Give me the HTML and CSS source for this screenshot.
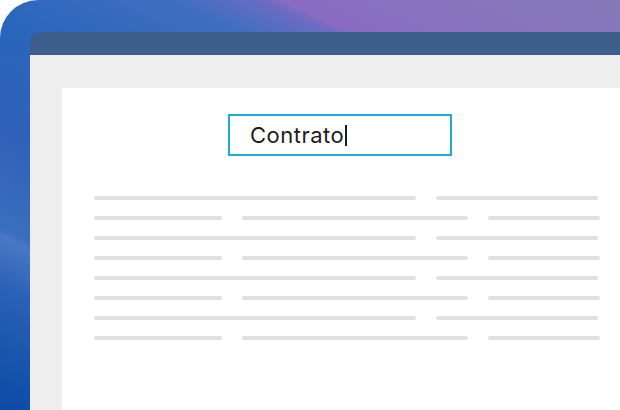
FILE: index.html
```html
<!DOCTYPE html>
<html lang="pt">
<head>
<meta charset="utf-8">
<title>Contrato</title>
<link rel="stylesheet" href="styles.css">
</head>
<body>
<div class="frame">
  <div class="window">
    <div class="titlebar"></div>
    <div class="content">
      <div class="page">
        <div class="search"><span class="query">Contrato</span><span class="caret"></span></div>
        <div class="lines">
          <div class="row"><span class="bar w322"></span><span class="bar w162"></span></div>
          <div class="row"><span class="bar w128"></span><span class="bar w226"></span><span class="bar w112"></span></div>
          <div class="row"><span class="bar w322"></span><span class="bar w162"></span></div>
          <div class="row"><span class="bar w128"></span><span class="bar w226"></span><span class="bar w112"></span></div>
          <div class="row"><span class="bar w322"></span><span class="bar w162"></span></div>
          <div class="row"><span class="bar w128"></span><span class="bar w226"></span><span class="bar w112"></span></div>
          <div class="row"><span class="bar w322"></span><span class="bar w162"></span></div>
          <div class="row"><span class="bar w128"></span><span class="bar w226"></span><span class="bar w112"></span></div>
        </div>
      </div>
    </div>
  </div>
</div>
</body>
</html>
```
FILE: styles.css
```css
html, body {
  margin: 0;
  padding: 0;
  background: #ffffff;
  width: 620px;
  height: 410px;
  overflow: hidden;
}

.frame {
  width: 620px;
  height: 410px;
  box-sizing: border-box;
  padding: 32px 0 0 30px;
  border-top-left-radius: 38px;
  overflow: hidden;
  background:
    linear-gradient(205deg, #857bb9 0%, #8a6cc2 22.5%, #6a6cc2 24%, #3f6ec0 30%, #2a66bc 44%, #2f62b8 60%, #3a6ebe 74%, #4a78c4 75%, #2a62b6 82%, #0b4aa6 100%);
}

.window {
  height: 100%;
  display: flex;
  flex-direction: column;
  border-top-left-radius: 11px;
  overflow: hidden;
}

.titlebar {
  height: 23px;
  flex: none;
  background: #3c5e8b;
}

.content {
  flex: 1;
  background: #eeeeee;
  padding: 33px 0 0 32px;
  display: flex;
}

.page {
  flex: 1;
  background: #ffffff;
  padding: 26px 0 0 32px;
}

.search {
  margin-left: 134px;
  width: 224px;
  height: 42px;
  box-sizing: border-box;
  border: 2px solid #1eaadc;
  display: flex;
  align-items: center;
  padding-left: 20px;
  font-family: "Inter", "Noto Sans", sans-serif;
  font-size: 22px;
  font-weight: 400;
  color: #1c1c1c;
  letter-spacing: 0.5px;
}

.caret {
  display: inline-block;
  width: 1.5px;
  height: 21px;
  margin-left: 1px;
  background: #1c1c1c;
}

.lines {
  margin-top: 40px;
  display: flex;
  flex-direction: column;
  gap: 16px;
}

.row {
  display: flex;
  gap: 20px;
}

.bar {
  display: block;
  height: 4px;
  border-radius: 2px;
  background: #e1e1e1;
}

.w322 { width: 322px; }
.w162 { width: 162px; }
.w128 { width: 128px; }
.w226 { width: 226px; }
.w112 { width: 112px; }
```
